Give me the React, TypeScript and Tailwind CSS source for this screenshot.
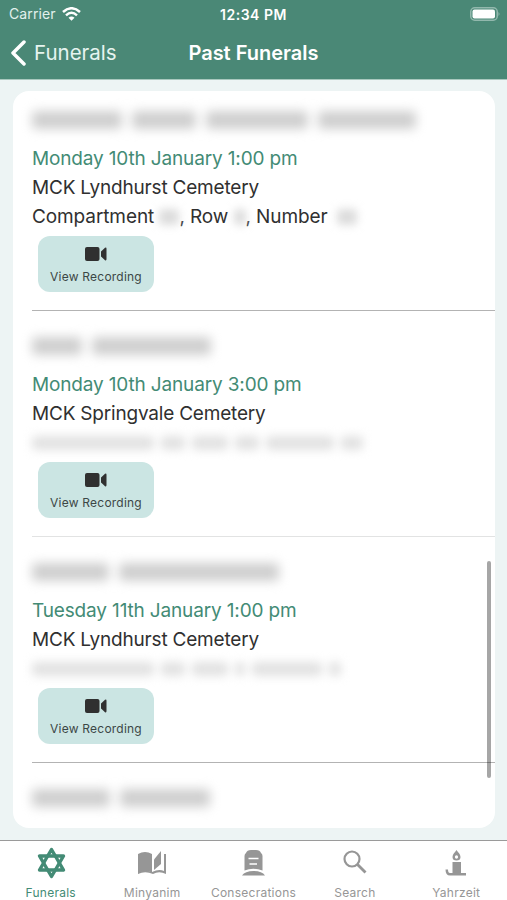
import { Fragment, ReactNode } from "react";
import clsx from "clsx";

interface Funeral {
  // widths of the hidden words, in pixels
  name: number[];
  date: string;
  cemetery: string;
  plot?: number[];
  divider: string;
}

const funerals: Funeral[] = [
  {
    name: [90, 64, 102, 98],
    date: "Monday 10th January 1:00 pm",
    cemetery: "MCK Lyndhurst Cemetery",
    divider: "bg-[#b3b3b3]",
  },
  {
    name: [50, 119],
    date: "Monday 10th January 3:00 pm",
    cemetery: "MCK Springvale Cemetery",
    plot: [122, 24, 36, 24, 68, 22],
    divider: "bg-[#e2e3e3]",
  },
  {
    name: [77, 160],
    date: "Tuesday 11th January 1:00 pm",
    cemetery: "MCK Lyndhurst Cemetery",
    plot: [122, 24, 36, 10, 70, 12],
    divider: "bg-[#b3b3b3]",
  },
];

function HiddenWords({ widths, small }: { widths: number[]; small?: boolean }) {
  return (
    <div
      aria-hidden="true"
      className={clsx(
        "flex items-center",
        small ? "h-[29px] gap-[7px] blur-[5px]" : "h-[30px] gap-[10px] blur-[5.5px]"
      )}
    >
      {widths.map((width, index) => (
        <span
          key={index}
          className={small ? "h-3.5 rounded bg-[#e2e2e2]" : "h-[18px] rounded bg-[#cfcfcf]"}
          style={{ width }}
        />
      ))}
    </div>
  );
}

function HiddenValue({ className }: { className: string }) {
  return (
    <span
      aria-hidden="true"
      className={clsx("inline-block h-4 rounded bg-[#dcdcdc] align-[-2px] blur-[4.5px]", className)}
    />
  );
}

function FuneralRow({ funeral }: { funeral: Funeral }) {
  return (
    <Fragment>
      <div className="h-[225px] pl-[19px] pt-5">
        <HiddenWords widths={funeral.name} />
        <p className="mt-[9px] h-[29px] text-[19px] leading-[29px] tracking-[-0.15px] text-[#438b75]">
          {funeral.date}
        </p>
        <p className="h-[29px] text-[19px] leading-[30px] tracking-[-0.2px] text-[#303030]">
          {funeral.cemetery}
        </p>
        {funeral.plot ? (
          <HiddenWords widths={funeral.plot} small />
        ) : (
          <p className="h-[29px] text-[19px] leading-[30px] tracking-[-0.1px] text-[#303030]">
            Compartment <HiddenValue className="w-5" />, Row{" "}
            <HiddenValue className="w-3" />, Number <HiddenValue className="ml-1 w-5" />
          </p>
        )}
        <button className="ml-[6px] mt-[5px] flex h-14 w-[116px] flex-col items-center rounded-[12px] bg-[#cbe5e3] pt-[11px] text-[#303030]">
          <svg width="22" height="14" viewBox="0 0 22 14" fill="currentColor">
            <rect width="14.500" height="14" rx="2" />
            <path d="M16 4.500 20 .8Q21.500 0 21.500 2V12Q21.500 14 20 13.200L16 9.500Z" />
          </svg>
          <span className="mt-2 text-[12px] leading-4 tracking-[0.22px] text-[#3c4746]">
            View Recording
          </span>
        </button>
      </div>
      <div className={clsx("ml-[19px] h-px", funeral.divider)} />
    </Fragment>
  );
}

function StarIcon() {
  return (
    <svg width="30" height="32" viewBox="0 0 30 32" fill="none" stroke="currentColor" strokeWidth="3.400" strokeLinejoin="round">
      <path d="M15.500 2.500 27.500 23H3.500Z" />
      <path d="M15.500 29.500 3.500 9H27.500Z" />
    </svg>
  );
}

function BookIcon() {
  return (
    <svg width="30" height="32" viewBox="0 0 30 32" fill="currentColor">
      <path d="M1 7Q8 3 15 7V25.500Q8 22 1 26.500Z" />
      <path d="M17 12.500 24 4V17L17 23Z" />
      <path d="M27 7H29V27Q22 23.500 16 27Q8 23.500 1 27V25Q8 22 15 25Q22 21.500 27 24Z" />
    </svg>
  );
}

function GraveIcon() {
  return (
    <svg width="30" height="32" viewBox="0 0 30 32">
      <path d="M6.500 23.500V9Q6.500 7 8 6Q9 3 13 3H18Q22 3 23 6Q24.500 7 24.500 9V23.500Q15 20 6.500 23.500Z" fill="currentColor" />
      <path d="M4 28.500Q7 24 15.500 24T27 28.500Z" fill="currentColor" />
      <path d="M10.500 11.500H20.500M11.500 17H19" stroke="white" strokeWidth="1.700" />
    </svg>
  );
}

function SearchIcon() {
  return (
    <svg width="30" height="32" viewBox="0 0 30 32" fill="none" stroke="currentColor">
      <circle cx="12" cy="12" r="7.500" strokeWidth="2.200" />
      <path d="m17.500 17.500 8 8" strokeWidth="2.800" />
    </svg>
  );
}

function CandleIcon() {
  return (
    <svg width="30" height="32" viewBox="0 0 30 32" fill="currentColor">
      <path
        fillRule="evenodd"
        d="M15.500 3C17 5.500 19.500 7 19.500 10A4 3.500 0 0 1 11.500 10C11.500 7 14 5.500 15.500 3ZM15.500 8.200A1.600 1.800 0 1 0 15.500 11.800A1.600 1.800 0 1 0 15.500 8.200Z"
      />
      <path d="M11.500 15H20V26H25V28.500H9Q4.500 28.500 4.500 22.500H7Q7 26 9 26H11.500Z" />
    </svg>
  );
}

const tabs: { label: string; icon: ReactNode }[] = [
  { label: "Funerals", icon: <StarIcon /> },
  { label: "Minyanim", icon: <BookIcon /> },
  { label: "Consecrations", icon: <GraveIcon /> },
  { label: "Search", icon: <SearchIcon /> },
  { label: "Yahrzeit", icon: <CandleIcon /> },
];

export default function App() {
  return (
    <div className="flex h-[900px] w-[507px] flex-col overflow-hidden bg-[#edf4f4] font-['Inter','Liberation_Sans',sans-serif]">
      <header className="h-20 shrink-0 border-b border-[#a9c8be] bg-[#4a8876] text-white">
        {/* Status bar */}
        <div className="grid h-7 grid-cols-3 items-center pl-[9px] pr-[6px]">
          <div className="-mt-px flex items-center gap-[6px] text-[14px] text-[#e2f1ed]">
            <span className="tracking-[0.1px]">Carrier</span>
            <svg width="19" height="14" viewBox="0 0 19 14" fill="none" stroke="white" strokeWidth="2.500">
              <path d="M1 5Q9.500-2.500 18 5M4 8.300Q9.500 3.300 15 8.300" />
              <path d="M6.500 10.700Q9.500 8.200 12.500 10.700L9.500 13.700Z" fill="white" stroke="none" />
            </svg>
          </div>
          <span className="-ml-[3px] text-center text-[14px] font-semibold tracking-[0.5px]">12:34 PM</span>
          <svg className="-mt-px justify-self-end" width="31" height="14" viewBox="0 0 31 14">
            <rect x=".75" y=".75" width="26.500" height="12.500" rx="4" fill="none" stroke="#92b8ad" strokeWidth="1.500" />
            <rect x="2.500" y="2.500" width="22.500" height="9" rx="2" fill="white" />
            <path d="M28.500 5Q30.500 7 28.500 9Z" fill="#92b8ad" />
          </svg>
        </div>
        <div className="grid h-[50px] grid-cols-3 items-center">
          <button className="flex items-center gap-2 pl-[11px] text-[20.5px] text-[#e6f4f0]">
            <svg width="15" height="26" viewBox="0 0 15 26" fill="none" stroke="white" strokeWidth="3.500" strokeLinecap="round" strokeLinejoin="round">
              <path d="M13 2 2 13 13 24" />
            </svg>
            Funerals
          </button>
          <h1 className="whitespace-nowrap text-center text-[20px] font-semibold">Past Funerals</h1>
        </div>
      </header>

      <main className="relative ml-[13px] mr-3 mt-[11px] h-[737px] shrink-0 overflow-hidden rounded-[16px] bg-white">
        <div className="-mt-[6px]">
          {funerals.map((funeral, index) => (
            <FuneralRow key={index} funeral={funeral} />
          ))}
          <div className="pl-[19px] pt-5">
            <HiddenWords widths={[78, 90]} />
          </div>
        </div>
        {/* Scroll indicator */}
        <div className="absolute right-[4px] top-[470px] h-[217px] w-1 rounded-full bg-black/35" />
      </main>

      <nav className="mt-3 grid grow grid-cols-5 border-t border-[#9a9a9a] bg-white">
        {tabs.map((tab, index) => (
          <button
            key={tab.label}
            className={clsx(
              "flex flex-col items-center pt-[6px] text-[12px] tracking-[0.25px]",
              index === 0 ? "text-[#438b75]" : "text-[#969696]"
            )}
          >
            {tab.icon}
            <span className="mt-[6px] leading-4">{tab.label}</span>
          </button>
        ))}
      </nav>
    </div>
  );
}
